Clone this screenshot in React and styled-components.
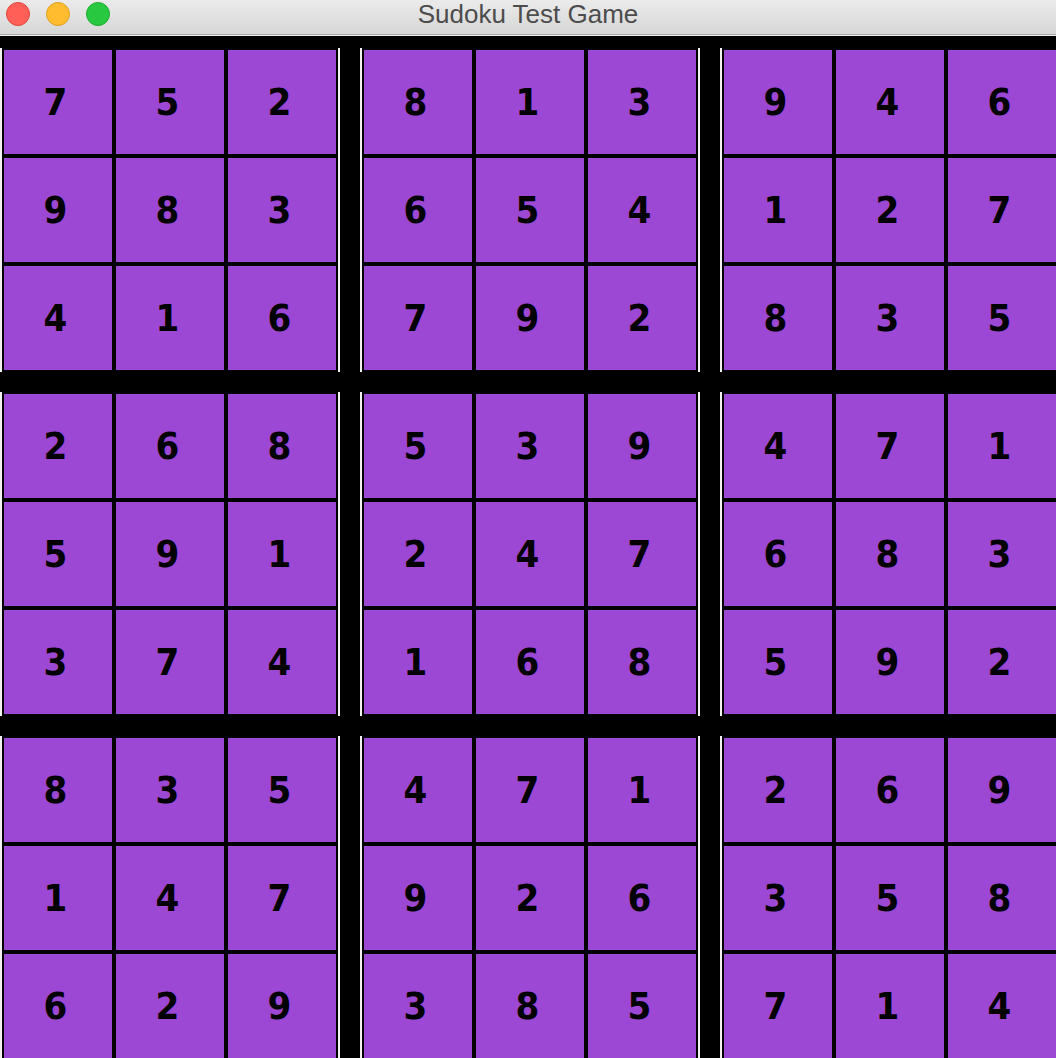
import React from "react";
import styled, { createGlobalStyle } from "styled-components";

const board = [
  [7, 5, 2, 8, 1, 3, 9, 4, 6],
  [9, 8, 3, 6, 5, 4, 1, 2, 7],
  [4, 1, 6, 7, 9, 2, 8, 3, 5],
  [2, 6, 8, 5, 3, 9, 4, 7, 1],
  [5, 9, 1, 2, 4, 7, 6, 8, 3],
  [3, 7, 4, 1, 6, 8, 5, 9, 2],
  [8, 3, 5, 4, 7, 1, 2, 6, 9],
  [1, 4, 7, 9, 2, 6, 3, 5, 8],
  [6, 2, 9, 3, 8, 5, 7, 1, 4],
];

// pull out the 9 values of block (br, bc)
const blockValues = (br, bc) => {
  const out = [];
  for (let r = 0; r < 3; r++) {
    for (let c = 0; c < 3; c++) {
      out.push(board[br * 3 + r][bc * 3 + c]);
    }
  }
  return out;
};

const lights = [
  { fill: "#ff5f57", edge: "#e2463f" },
  { fill: "#febc2e", edge: "#dfa023" },
  { fill: "#28c840", edge: "#1dad2b" },
];

const App = () => {
  return (
    <>
      <GlobalStyle />
      <Window>
        <TitleBar>
          <Lights>
            {lights.map((l, i) => (
              <Light key={i} $fill={l.fill} $edge={l.edge} />
            ))}
          </Lights>
          <Title>Sudoku Test Game</Title>
        </TitleBar>
        <Content>
          <Board>
            {[0, 1, 2].map((br) =>
              [0, 1, 2].map((bc) => (
                <Block key={`${br}-${bc}`}>
                  {blockValues(br, bc).map((v, i) => (
                    <Cell key={i}>{v}</Cell>
                  ))}
                </Block>
              ))
            )}
          </Board>
        </Content>
      </Window>
    </>
  );
};

export default App;

const GlobalStyle = createGlobalStyle`
  html, body {
    margin: 0;
    padding: 0;
    background: #000;
    overflow: hidden;
  }
`;

const Window = styled.div`
  width: 1056px;
  height: 1058px;
  display: flex;
  flex-direction: column;
  overflow: hidden;
  background: #000;
`;

const TitleBar = styled.div`
  position: relative;
  height: 34px;
  flex-shrink: 0;
  display: flex;
  align-items: center;
  justify-content: center;
  background: linear-gradient(to bottom, #ebebeb, #d6d6d6);
  border-bottom: 1px solid #acacac;
  box-shadow: 0 1px 0 #efefef;
`;

const Lights = styled.div`
  position: absolute;
  left: 6px;
  top: 2px;
  display: flex;
  gap: 16px;
`;

const Light = styled.span`
  width: 22px;
  height: 22px;
  border-radius: 50%;
  background: ${(p) => p.$fill};
  border: 1px solid ${(p) => p.$edge};
`;

const Title = styled.div`
  font-family: "Liberation Sans", Arial, sans-serif;
  font-size: 26px;
  color: #4c4c4c;
  margin-top: -5px;
`;

const Content = styled.div`
  flex: 1;
  padding-top: 13px;
  background: #000;
`;

const Board = styled.div`
  display: grid;
  grid-template-columns: repeat(3, 340px);
  grid-auto-rows: 324px;
  gap: 20px;
  width: 1060px;
  background: #000;
`;

const Block = styled.div`
  display: grid;
  grid-template-columns: repeat(3, 108px);
  grid-template-rows: repeat(3, 104px);
  gap: 4px;
  padding: 2px;
  background: #000;
  border-left: 2px solid #f2f2f2;
  border-right: 2px solid #f2f2f2;
`;

const Cell = styled.div`
  display: flex;
  align-items: center;
  justify-content: center;
  padding-right: 5px;
  background: #9d47d5;
  color: #000;
  font-family: "DejaVu Sans Condensed", "DejaVu Sans", sans-serif;
  font-stretch: condensed;
  font-weight: bold;
  font-size: 38px;
`;
